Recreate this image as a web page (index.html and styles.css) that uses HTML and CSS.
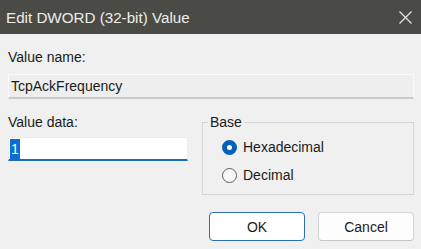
FILE: index.html
```html
<!DOCTYPE html>
<html lang="en">
<head>
    <meta charset="UTF-8">
    <title>Edit DWORD (32-bit) Value</title>
    <link rel="stylesheet" href="styles.css">
</head>
<body>
    <div class="dialog">
        <div class="titlebar">
            <span class="title">Edit DWORD (32-bit) Value</span>
            <svg class="close" width="13" height="13" viewBox="0 0 13 13">
                <path d="M0.5 0.5 L12.5 12.5 M12.5 0.5 L0.5 12.5" stroke="#e4e4e4" stroke-width="1.3" fill="none"/>
            </svg>
        </div>

        <div class="content">
            <div class="label name-label">Value name:</div>
            <div class="name-box">TcpAckFrequency</div>

            <div class="row">
                <div class="data-col">
                    <div class="label">Value data:</div>
                    <div class="data-input"><span class="sel">1</span></div>
                </div>
                <fieldset class="base">
                    <legend>Base</legend>
                    <div class="radio checked"><span class="dot"></span>Hexadecimal</div>
                    <div class="radio"><span class="dot"></span>Decimal</div>
                </fieldset>
            </div>

            <div class="buttons">
                <button class="btn default">OK</button>
                <button class="btn">Cancel</button>
            </div>
        </div>
    </div>
</body>
</html>
```

FILE: styles.css
```css
body {
    margin: 0;
    background: #f0f0f0;
    font-family: "Liberation Sans", Arial, sans-serif;
    font-size: 14px;
    color: #1b1b1b;
}

.dialog {
    width: 421px;
    height: 249px;
    overflow: hidden;
}

.titlebar {
    height: 34px;
    background: #4b4b46;
    display: flex;
    align-items: center;
    justify-content: space-between;
    padding: 0 9px 0 6px;
}

.title {
    color: #ededeb;
    font-size: 15.2px;
    line-height: 18px;
    padding-top: 1px;
}

.close {
    display: block;
    margin-top: 1px;
}

.content {
    padding: 0 7px 0 8px;
}

.label {
    line-height: 16px;
}

.name-label {
    margin-top: 15px;
}

.name-box {
    margin-top: 9px;
    height: 25px;
    box-sizing: border-box;
    padding: 2px 0 0 2px;
    line-height: 18px;
    background: #eeeeee;
    border: 1px solid #fafafa;
    border-bottom: 2px solid #cacaca;
}

.row {
    display: flex;
    margin-top: 15px;
}

.data-col {
    width: 180px;
}

.data-input {
    margin-top: 7px;
    height: 24px;
    box-sizing: border-box;
    background: #fff;
    border: 1px solid #ebebeb;
    border-bottom: 2px solid #1a6bb8;
    padding: 1px 0 0 1px;
}

.sel {
    display: inline-block;
    background: #0a6fd0;
    color: #fff;
    line-height: 20px;
    padding: 0 1px;
}

.base {
    margin: 0 0 0 14px;
    width: 212px;
    box-sizing: border-box;
    border: 1px solid #d6d6d6;
    padding: 9px 5px 11px 5px;
    display: flex;
    flex-direction: column;
    gap: 12px;
}

.base legend {
    padding: 0 2px;
    line-height: 16px;
}

.radio {
    display: flex;
    align-items: center;
    height: 16px;
    line-height: 16px;
    padding-left: 14px;
}

.dot {
    width: 15px;
    height: 15px;
    box-sizing: border-box;
    border-radius: 50%;
    border: 1px solid #5e5e5e;
    background: #f7f7f7;
    margin-right: 6px;
    flex: none;
}

.radio.checked .dot {
    border: 5px solid #0561b8;
    background: #fff;
}

.buttons {
    display: flex;
    justify-content: flex-end;
    gap: 13px;
    margin-top: 17px;
}

.btn {
    width: 96px;
    height: 29px;
    font-family: inherit;
    font-size: 14px;
    color: #1b1b1b;
    background: #fdfdfd;
    border: 1px solid #d4d4d4;
    border-bottom-color: #c4c4c4;
    border-radius: 4px;
    padding: 0;
}

.btn.default {
    background: #fff;
    border: 1px solid #2c6fb5;
}
```
